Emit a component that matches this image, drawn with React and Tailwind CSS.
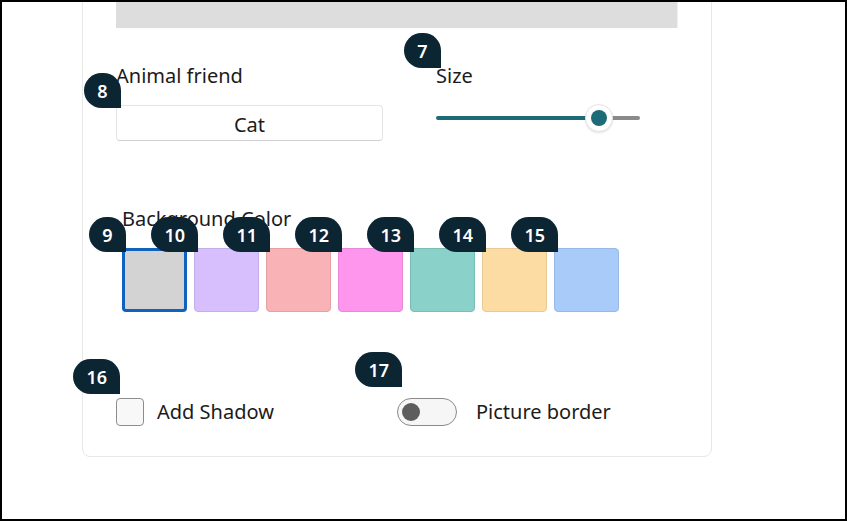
import React from 'react';

// Petit badge numéroté (annotation posée sur le coin haut-gauche d'un contrôle)
const Badge = ({ n, className = '' }) => (
  <div
    className={`absolute z-10 flex h-[35px] min-w-[37px] items-center justify-center rounded-[18px] rounded-br-none bg-[#0b2533] px-[13px] text-[18px] font-semibold leading-none text-white ${className}`}
  >
    {n}
  </div>
);

const swatches = [
  { bg: '#d3d3d3', border: '#d3d3d3' },
  { bg: '#d6bffc', border: '#c3aee8' },
  { bg: '#f9b2b5', border: '#e3a1a4' },
  { bg: '#fe96ed', border: '#e888d8' },
  { bg: '#8ad2c9', border: '#7bbdb5' },
  { bg: '#fddca3', border: '#e8c993' },
  { bg: '#a8cbf9', border: '#98b9e6' },
];

export default function App() {
  return (
    <div
      className="h-[521px] w-[847px] overflow-hidden border-2 border-black bg-white text-[#1b1b1b]"
      style={{ fontFamily: '"Noto Sans", "Open Sans", sans-serif' }}
    >
      {/* CARTE */}
      <div className="-mt-[160px] ml-[80px] w-[630px] rounded-lg border border-[#e8e8e8] px-[33px] pt-[34px] pb-[30px]">
        <div className="h-[151px] w-[561px] bg-[#dddddd] shadow-[1px_0_1px_rgba(0,0,0,0.06)]" />

        {/* Animal + taille */}
        <div className="mt-[36px] flex">
          <div className="relative w-[320px]">
            <div className="text-[20px] leading-[24px]">Animal friend</div>
            <div className="relative mt-[17px] flex h-[36px] w-[267px] items-center justify-center rounded-[4px] border border-[#e5e5e5] border-b-[#d0d0d0] bg-white pt-[3px] text-[20px]">
              <Badge n="8" className="right-[calc(100%-4px)] bottom-[calc(100%-2px)]" />
              Cat
            </div>
          </div>
          <div className="relative w-[204px]">
            <Badge n="7" className="right-[calc(100%-5px)] bottom-[calc(100%-4px)]" />
            <div className="text-[20px] leading-[24px]">Size</div>
            <div className="relative mt-[16px] flex h-[28px] items-center">
              <div className="h-[4px] w-[163px] rounded-l-full bg-[#1e6b78]" />
              <div className="h-[4px] flex-1 rounded-r-full bg-[#8a8a8a]" />
              <div className="absolute left-[149px] top-0 flex h-[28px] w-[28px] items-center justify-center rounded-full border border-[#e6e6e6] bg-white shadow-[0_1px_2px_rgba(0,0,0,0.12)]">
                <div className="h-[16px] w-[16px] rounded-full bg-[#1e6b78]" />
              </div>
            </div>
          </div>
        </div>

        {/* Couleur de fond */}
        <div className="ml-[6px] mt-[66px]">
          <div className="text-[20px] leading-[24px]">Background Color</div>
          <div className="mt-[17px] flex gap-[7px]">
            {swatches.map((s, i) => (
              <div key={i} className="relative">
                <Badge n={9 + i} className="right-[calc(100%-4px)] bottom-[calc(100%-4px)]" />
                <div
                  className={`h-[64px] w-[65px] rounded-[4px] ${i === 0 ? 'border-[3px] border-[#0f62be]' : 'border'}`}
                  style={{ backgroundColor: s.bg, borderColor: i === 0 ? undefined : s.border }}
                />
              </div>
            ))}
          </div>
        </div>

        {/* Ombre + bordure */}
        <div className="mt-[86px] flex items-center">
          <div className="relative flex w-[281px] items-center gap-[13px]">
            <Badge n="16" className="right-[calc(100%-4px)] bottom-[calc(100%+4px)]" />
            <div className="h-[28px] w-[28px] rounded-[4px] border border-[#8d8d8d] bg-[#f8f8f8]" />
            <span className="text-[20px] leading-[24px]">Add Shadow</span>
          </div>
          <div className="relative flex items-center gap-[19px]">
            <Badge n="17" className="right-[calc(100%-5px)] bottom-[calc(100%+11px)]" />
            <div className="flex h-[28px] w-[60px] items-center rounded-full border border-[#8a8a8a] bg-[#f6f6f6] px-[4px]">
              <div className="h-[18px] w-[18px] rounded-full bg-[#5d5d5d]" />
            </div>
            <span className="text-[20px] leading-[24px]">Picture border</span>
          </div>
        </div>
      </div>
    </div>
  );
}
